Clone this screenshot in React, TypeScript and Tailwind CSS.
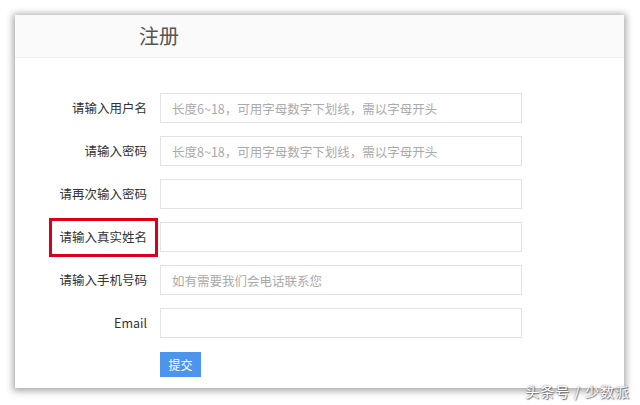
const fields = [
  { label: "请输入用户名", placeholder: "长度6~18，可用字母数字下划线，需以字母开头" },
  { label: "请输入密码", placeholder: "长度8~18，可用字母数字下划线，需以字母开头" },
  { label: "请再次输入密码", placeholder: "" },
  { label: "请输入真实姓名", placeholder: "", marked: true },
  { label: "请输入手机号码", placeholder: "如有需要我们会电话联系您" },
  { label: "Email", placeholder: "" },
];

export default function App() {
  return (
    <div
      className="relative w-[640px] h-[405px] bg-white pt-[15px] pl-[15px] overflow-hidden"
      style={{ fontFamily: '"Microsoft YaHei", "Noto Sans CJK SC", "Noto Sans", sans-serif' }}
    >
      <div className="w-[609px] h-[373px] bg-white shadow-[0_1px_7px_2px_rgba(0,0,0,0.35)]">
        <div className="h-[43px] bg-[#fafafa] border-b border-[#efefef] flex items-center pl-[124px]">
          <h1 className="text-[20px] text-[#555] font-normal leading-none">注册</h1>
        </div>

        <form className="pt-[35px] flex flex-col gap-[13px]">
          {fields.map(f => (
            <div key={f.label} className="relative flex items-center">
              <label className="w-[132px] text-right text-[12.5px] text-[#333] pr-0">{f.label}</label>
              <input
                className="ml-[13px] w-[362px] h-[30px] border border-[#e3e3e3] px-[11px] text-[12.5px] text-[#333] placeholder:text-[#aaa] outline-none"
                placeholder={f.placeholder}
              />
              {f.marked && (
                <div className="absolute left-[34px] top-[-4px] w-[109px] h-[39px] border-[3px] border-[#d9001b]" />
              )}
            </div>
          ))}
          <div className="flex pl-[145px] mt-[1px]">
            <button
              type="button"
              className="w-[41px] h-[25px] bg-[#4d94ec] text-white text-[12px] leading-none"
            >
              提交
            </button>
          </div>
        </form>
      </div>

      <div
        className="absolute right-[10px] bottom-[3px] text-[14px] text-white tracking-[1px]"
        style={{ textShadow: "0 0 2px #666, 1px 1px 1px #777" }}
      >
        头条号 / 少数派
      </div>
    </div>
  );
}
